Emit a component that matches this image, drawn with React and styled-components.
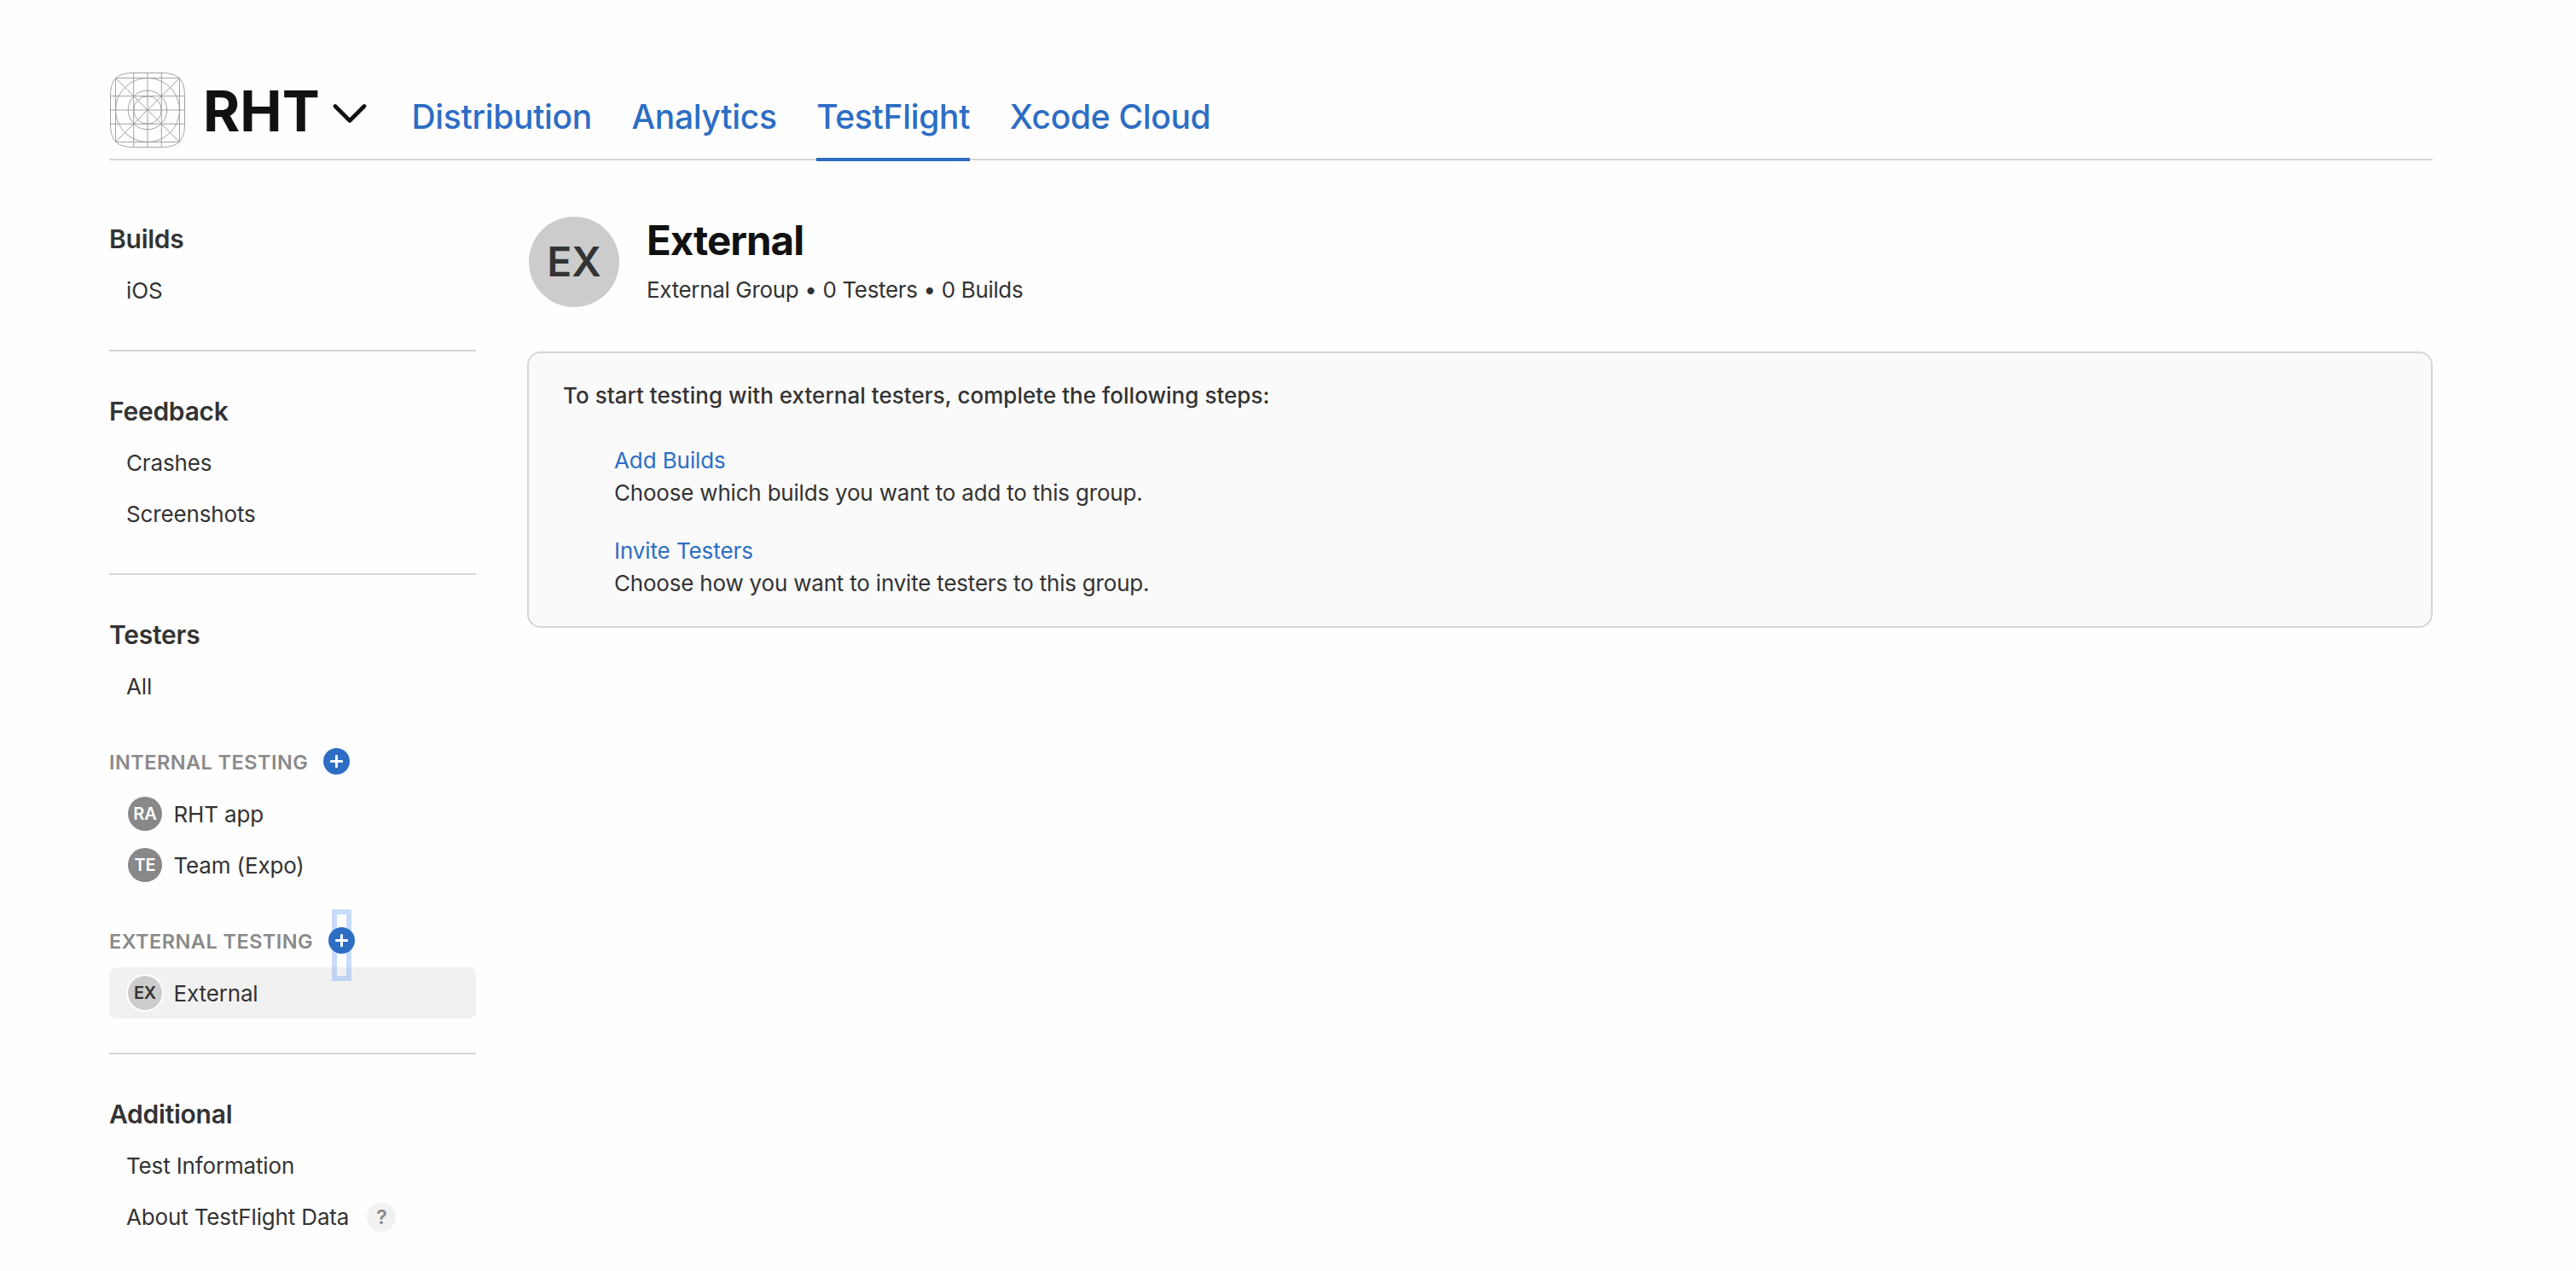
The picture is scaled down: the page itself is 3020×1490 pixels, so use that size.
import React from 'react'
import styled, { createGlobalStyle, css } from 'styled-components'

const blue = '#2d6dc4'
const line = '#d6d6d6'

const sections = [
  { title: 'Builds', items: ['iOS'] },
  { title: 'Feedback', items: ['Crashes', 'Screenshots'] },
  {
    title: 'Testers',
    items: ['All'],
    groups: [
      {
        title: 'Internal Testing',
        teams: [
          { initials: 'RA', name: 'RHT app' },
          { initials: 'TE', name: 'Team (Expo)' },
        ],
      },
      {
        title: 'External Testing',
        focused: true,
        teams: [{ initials: 'EX', name: 'External', external: true, active: true }],
      },
    ],
  },
  { title: 'Additional', items: ['Test Information', 'About TestFlight Data'], help: 'About TestFlight Data' },
]

const steps = [
  { link: 'Add Builds', text: 'Choose which builds you want to add to this group.' },
  { link: 'Invite Testers', text: 'Choose how you want to invite testers to this group.' },
]

function AppIcon() {
  const guides = [6.5, 27.7, 44, 60.3, 81.5]
  return (
    <IconSvg viewBox="0 0 88 88">
      <path d="M44 .5H60C80 .5 87.5 8 87.5 28V60C87.5 80 80 87.5 60 87.5H28C8 87.5 .5 80 .5 60V28C.5 8 8 .5 28 .5Z" />
      {guides.map((g) => (
        <path key={g} d={g === 6.5 || g === 81.5 ? `M${g} 7V81M7 ${g}H81` : `M${g} .5V87.5M.5 ${g}H87.5`} />
      ))}
      <path d="M6.5 6.5L81.5 81.5M81.5 6.5L6.5 81.5" />
      <circle cx="44" cy="44" r="37.5" />
      <circle cx="44" cy="44" r="22.8" />
      <circle cx="44" cy="44" r="16.3" />
    </IconSvg>
  )
}

function AddButton({ focused }) {
  return (
    <Add>
      {focused && <FocusRing />}
      <AddSvg viewBox="0 0 31 31">
        <circle cx="15.5" cy="15.5" r="15.5" fill={blue} />
        <path d="M15.5 9.3V21.7M9.3 15.5H21.7" stroke="#fff" strokeWidth="3" strokeLinecap="round" />
      </AddSvg>
    </Add>
  )
}

function Sidebar() {
  return (
    <Side>
      {sections.map((section) => (
        <Section key={section.title}>
          <SectionTitle>{section.title}</SectionTitle>
          {section.items.map((item) => (
            <Item key={item}>
              {item}
              {section.help === item && <Help>?</Help>}
            </Item>
          ))}
          {section.groups?.map((group) => (
            <React.Fragment key={group.title}>
              <GroupHead>
                <GroupTitle>{group.title}</GroupTitle>
                <AddButton focused={group.focused} />
              </GroupHead>
              {group.teams.map((team) => (
                <Item key={team.name} $active={team.active}>
                  <Badge $external={team.external}>{team.initials}</Badge>
                  {team.name}
                </Item>
              ))}
            </React.Fragment>
          ))}
        </Section>
      ))}
    </Side>
  )
}

function App() {
  return (
    <Page>
      <GlobalStyle />
      <Header>
        <AppIcon />
        <AppName>RHT</AppName>
        <Chevron viewBox="0 0 40 24">
          <path d="M3 3.5L20 20.5L37 3.5" />
        </Chevron>
        <Tabs>
          <Tab>Distribution</Tab>
          <Tab>Analytics</Tab>
          <Tab $active>TestFlight</Tab>
          <Tab>Xcode Cloud</Tab>
        </Tabs>
      </Header>
      <Body>
        <Sidebar />
        <Main>
          <GroupInfo>
            <Avatar>EX</Avatar>
            <div>
              <Title>External</Title>
              <Meta>External Group • 0 Testers • 0 Builds</Meta>
            </div>
          </GroupInfo>
          <Panel>
            <PanelTitle>To start testing with external testers, complete the following steps:</PanelTitle>
            {steps.map((step) => (
              <Step key={step.link}>
                <StepLink>{step.link}</StepLink>
                <StepText>{step.text}</StepText>
              </Step>
            ))}
          </Panel>
        </Main>
      </Body>
    </Page>
  )
}

export default App

const GlobalStyle = createGlobalStyle`
  * {
    box-sizing: border-box;
  }

  body {
    margin: 0;
    background: #fefefe;
    color: #333;
    font-family: Inter, 'Liberation Sans', sans-serif;
    font-size: 26px;
    overflow: hidden;
  }
`

const Page = styled.div`
  padding: 0 168px 0 128px;
  height: 1490px;
`

const Header = styled.header`
  display: flex;
  align-items: flex-start;
  height: 188px;
  border-bottom: 2px solid ${line};
`

const IconSvg = styled.svg`
  width: 88px;
  height: 88px;
  margin: 85px 0 0 1px;
  fill: none;
  stroke: #999;
  stroke-width: 0.9;
`

const AppName = styled.h1`
  width: 134px;
  margin: 90px 0 0 21px;
  font-size: 66px;
  font-weight: 700;
  line-height: 80px;
  color: #111;
  white-space: nowrap;
`

const Chevron = styled.svg`
  width: 40px;
  height: 24px;
  margin: 121px 0 0 18px;
  fill: none;
  stroke: #111;
  stroke-width: 4.6;
  stroke-linecap: round;
  stroke-linejoin: round;
`

const Tabs = styled.nav`
  display: flex;
  gap: 46.5px;
  margin: 113px 0 0 52.5px;
`

const Tab = styled.a`
  height: 76px;
  border-bottom: 4px solid ${(props) => (props.$active ? blue : 'transparent')};
  font-size: 39px;
  font-weight: 500;
  line-height: 48px;
  letter-spacing: -0.32px;
  color: ${blue};
  white-space: nowrap;
`

const Body = styled.div`
  display: flex;
  gap: 60px;
`

const Side = styled.aside`
  width: 430px;
  padding-top: 22px;
`

const Section = styled.section`
  padding: 50px 0 40px;

  & + & {
    border-top: 2px solid ${line};
  }
`

const SectionTitle = styled.h2`
  margin: 0 0 10px;
  font-size: 30px;
  font-weight: 600;
  line-height: 40px;
  letter-spacing: -0.25px;
`

const Item = styled.div`
  display: flex;
  align-items: center;
  height: 60px;
  padding-left: 20px;
  border-radius: 8px;
  letter-spacing: -0.15px;
  white-space: nowrap;
  background: ${(props) => (props.$active ? '#f1f1f1' : 'transparent')};
`

const Badge = styled.span`
  display: flex;
  align-items: center;
  justify-content: center;
  width: 40px;
  height: 40px;
  margin: 0 13.5px 0 2px;
  border-radius: 50%;
  font-size: 20px;
  font-weight: 600;
  color: #fff;
  background: #888;

  ${(props) =>
    props.$external &&
    css`
      color: #333;
      background: #ccc;
      box-shadow: 0 0 0 2px #fff;
    `}
`

const Help = styled.span`
  width: 34px;
  height: 34px;
  margin: 2px 0 0 21px;
  border-radius: 50%;
  background: #f1f1f1;
  color: #888;
  font-size: 23px;
  font-weight: 600;
  line-height: 34px;
  text-align: center;
`

const GroupHead = styled.div`
  display: flex;
  align-items: center;
  height: 90px;
  padding-top: 27px;
`

const GroupTitle = styled.h3`
  margin: 2px 18px 0 0;
  font-size: 23.5px;
  font-weight: 600;
  letter-spacing: 0.45px;
  color: #8a8a8a;
  text-transform: uppercase;
  white-space: nowrap;
`

const Add = styled.span`
  position: relative;
  width: 31px;
  height: 31px;
`

const AddSvg = styled.svg`
  position: relative;
  display: block;
  width: 31px;
  height: 31px;
`

const FocusRing = styled.span`
  position: absolute;
  top: -21px;
  left: 4px;
  width: 23px;
  height: 84px;
  border: 6px solid rgba(100, 160, 245, 0.36);
`

const Main = styled.main`
  flex: 1;
  padding-top: 66px;
`

const GroupInfo = styled.div`
  display: flex;
  height: 158px;
`

const Avatar = styled.div`
  width: 106px;
  height: 106px;
  margin: 0 32px 0 2px;
  border-radius: 50%;
  background: #ccc;
  font-size: 48px;
  font-weight: 600;
  line-height: 106px;
  text-align: center;
`

const Title = styled.h2`
  margin: 0;
  font-size: 47.5px;
  font-weight: 700;
  line-height: 56px;
  letter-spacing: -1px;
  color: #111;
`

const Meta = styled.p`
  margin: 11px 0 0;
  line-height: 38px;
  letter-spacing: -0.35px;
`

const Panel = styled.section`
  height: 324px;
  padding: 31px 40px;
  border: 2px solid ${line};
  border-radius: 16px;
  background: #fafafa;
`

const PanelTitle = styled.p`
  margin: 0 0 38px;
  font-weight: 500;
  line-height: 38px;
  letter-spacing: 0.03px;
`

const Step = styled.div`
  margin: 0 0 30px 60px;
  line-height: 38px;
`

const StepLink = styled.a`
  letter-spacing: -0.1px;
  color: ${blue};
`

const StepText = styled.p`
  margin: 0;
  letter-spacing: -0.2px;
`
